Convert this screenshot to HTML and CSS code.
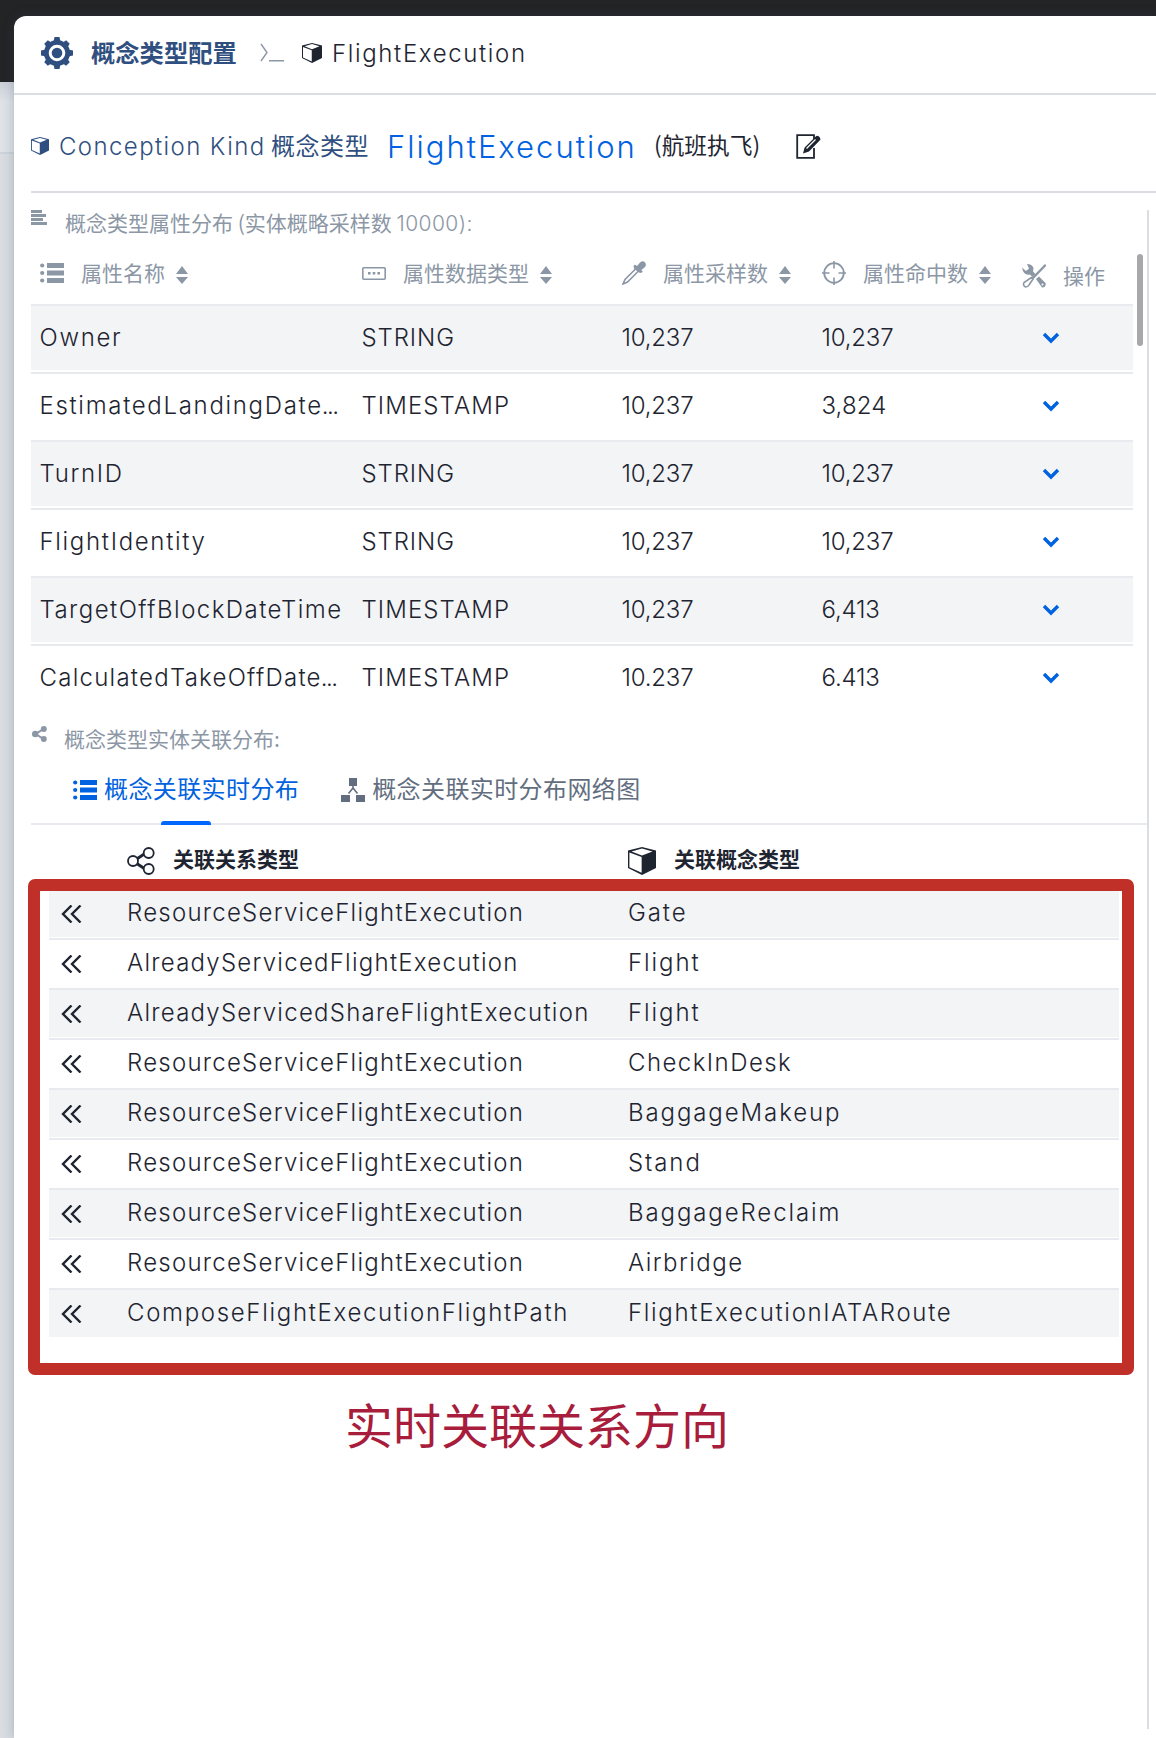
FILE: index.html
```html
<!DOCTYPE html>
<html lang="zh-CN">
<head>
<meta charset="utf-8">
<title>概念类型配置</title>
<link rel="stylesheet" href="styles.css">
</head>
<body>
<svg width="0" height="0" class="defs">
  <symbol id="cube" viewBox="0 0 16 16"><path d="M8 0 0 2v10l8 4 8-4V2zM.8 3.200l7 2.500v9L.8 11.500zM8 4.900 2 2.500 8 .8l6 1.700z" fill="currentColor" fill-rule="evenodd"/></symbol>
  <symbol id="list" viewBox="0 0 24 20"><path d="M7 0h17v5H7zM7 7.500h17v5H7zM7 15h17v5H7z" fill="currentColor"/><circle cx="2.200" cy="2.500" r="2.100" fill="currentColor"/><circle cx="2.200" cy="10" r="2.100" fill="currentColor"/><circle cx="2.200" cy="17.500" r="2.100" fill="currentColor"/></symbol>
  <symbol id="sort" viewBox="0 0 12 18"><path d="M6 0l6 8H0zM6 18l6-7H0z" fill="currentColor"/></symbol>
  <symbol id="down" viewBox="0 0 18 12"><path d="M2 2l7 7 7-7" fill="none" stroke="currentColor" stroke-width="3.400"/></symbol>
  <symbol id="left2" viewBox="0 0 21 18"><path d="M10.500 .5 2 9l8.500 8.500M19.500 .5 11 9l8.500 8.500" fill="none" stroke="currentColor" stroke-width="2.400"/></symbol>
</svg>
<div class="appbar"></div>
<div class="backdrop"></div>
<main class="drawer">
  <header class="head">
    <svg class="gear" viewBox="0 0 32 32"><g fill="currentColor"><circle cx="16" cy="16" r="13"/><path d="M13.500 0h5l1 5h-7zM13.500 32h5l1-5h-7zM0 13.500v5l5 1v-7zM32 13.500v5l-5 1v-7z"/><path transform="rotate(45 16 16)" d="M13.500 .5h5l1 4.500h-7zM13.500 31.500h5l1-4.500h-7zM.5 13.500v5l4.500 1v-7zM31.500 13.500v5l-4.500 1v-7z"/></g><circle cx="16" cy="16" r="6.800" fill="none" stroke="#fff" stroke-width="3"/></svg>
    <b class="title">概念类型配置</b>
    <svg class="prompt" viewBox="0 0 24 19"><path d="M1 1l6 8.500L1 18M9 17.800h15" fill="none" stroke="currentColor" stroke-width="1.400"/></svg>
    <svg class="cube-s"><use href="#cube"/></svg>
    <span class="lat t-head">FlightExecution</span>
  </header>
  <section class="kind">
    <svg class="cube-xs"><use href="#cube"/></svg>
    <span class="lat t-kind">Conception Kind</span>
    <span class="cn-kind">概念类型</span>
    <span class="lat t-name">FlightExecution</span>
    <span class="alias">(航班执飞)</span>
    <svg class="edit" viewBox="0 0 25 25"><path d="M18 5V1.200H1.200v22.600H18V14" fill="none" stroke="currentColor" stroke-width="1.800"/><path d="M7 19.500l1.600-6L20 2.200q1.400-1 3 .4t1.400 3.200L13 17.600z" fill="currentColor"/><path d="M10.500 14.500l9-9" stroke="#fff" stroke-width="1.200"/></svg>
  </section>
  <div class="content">
    <div class="caption">
      <svg class="lines" viewBox="0 0 16 15"><path d="M0 0h11v3H0zM0 4h15v3H0zM0 8h12v3H0zM0 12h16v3H0z" fill="currentColor"/></svg>
      <span>概念类型属性分布 (实体概略采样数 <i class="lat t-cap">10000):</i></span>
    </div>
    <div class="attrs">
      <div class="arow ahead">
        <div><svg class="i-list"><use href="#list"/></svg><span>属性名称</span><svg class="sort"><use href="#sort"/></svg></div>
        <div><svg class="i-list" viewBox="0 0 24 20"><rect x=".8" y="4.800" width="22.400" height="11.400" rx="1" fill="none" stroke="currentColor" stroke-width="1.600"/><path d="M6 9h2.600v2.600H6zM10.700 9h2.600v2.600h-2.600zM15.400 9H18v2.600h-2.600z" fill="currentColor"/></svg><span>属性数据类型</span><svg class="sort"><use href="#sort"/></svg></div>
        <div><svg class="i-sq" viewBox="0 0 24 24"><path d="M14 7.500 3 18.500 1 23l4.500-2L16.500 10" fill="none" stroke="currentColor" stroke-width="1.600"/><path d="M11.500 5l1.500-1.500 2 1.500L18 1.500q3-2.500 5 0t-.5 5L19.300 9l1.500 1.500-1.500 1.500-2.500-.5L12 7.500z" fill="currentColor"/></svg><span>属性采样数</span><svg class="sort"><use href="#sort"/></svg></div>
        <div><svg class="i-sq" viewBox="0 0 24 24"><circle cx="12" cy="12" r="9.800" fill="none" stroke="currentColor" stroke-width="1.800"/><path d="M12 0v7.500M12 16.500V24M0 12h7.500M16.500 12H24" stroke="currentColor" stroke-width="1.600"/></svg><span>属性命中数</span><svg class="sort"><use href="#sort"/></svg></div>
        <div class="ops"><svg class="i-sq" viewBox="0 0 24 24"><path d="M23 1.500 10 15" stroke="currentColor" stroke-width="2.400" stroke-linecap="round"/><path d="M9.500 13.500 2 18.500q-1.500 3 1.500 4.500Q6 23 7 21l4-6z" fill="#fff" stroke="currentColor" stroke-width="1.600"/><path d="M0 3.500l4 3.500 3-2.500L5 0q5 0 6.500 4L11 7.500l2.500 2.500-3 3L8 10.500Q1.500 12 0 3.500zM14 15l3-2.500 6.500 6.500q1 3.500-2.500 4.500h-1z" fill="currentColor"/><circle cx="20.500" cy="20.500" r="1" fill="#fff"/></svg><span>操作</span></div>
      </div>
      <div class="arow odd"><div class="lat k3">Owner</div><div class="lat">STRING</div><div class="num">10,237</div><div class="num">10,237</div><div class="act"><svg><use href="#down"/></svg></div></div>
      <div class="arow"><div class="lat k3">EstimatedLandingDate<i class="dots">...</i></div><div class="lat k0">TIMESTAMP</div><div class="num">10,237</div><div class="num n4">3,824</div><div class="act"><svg><use href="#down"/></svg></div></div>
      <div class="arow odd"><div class="lat k3">TurnID</div><div class="lat">STRING</div><div class="num">10,237</div><div class="num">10,237</div><div class="act"><svg><use href="#down"/></svg></div></div>
      <div class="arow"><div class="lat k3">FlightIdentity</div><div class="lat">STRING</div><div class="num">10,237</div><div class="num">10,237</div><div class="act"><svg><use href="#down"/></svg></div></div>
      <div class="arow odd"><div class="lat k2">TargetOffBlockDateTime</div><div class="lat k0">TIMESTAMP</div><div class="num">10,237</div><div class="num">6,413</div><div class="act"><svg><use href="#down"/></svg></div></div>
      <div class="arow last"><div class="lat k1">CalculatedTakeOffDate<i class="dots">...</i></div><div class="lat k0">TIMESTAMP</div><div class="num">10.237</div><div class="num">6.413</div><div class="act"><svg><use href="#down"/></svg></div></div>
      <div class="thumb"></div>
    </div>
    <div class="caption second">
      <svg class="share" viewBox="0 0 15 16"><path d="M11.500 3.200 3.500 8l8 4.800" fill="none" stroke="currentColor" stroke-width="2"/><circle cx="11.800" cy="3" r="3" fill="currentColor"/><circle cx="3.200" cy="8" r="3.200" fill="currentColor"/><circle cx="11.800" cy="13" r="3" fill="currentColor"/></svg>
      <span>概念类型实体关联分布:</span>
    </div>
    <nav class="tabs">
      <div class="tab on"><svg class="i-list"><use href="#list"/></svg><span>概念关联实时分布</span></div>
      <div class="tab"><svg class="net" viewBox="0 0 24 24"><path d="M8 0h8v8H8zM0 17h9v7H0zM15 17h9v7h-9z" fill="currentColor"/><path d="M12 7v4M12 10l-4.500 5.500M12 10l4.500 5.500" stroke="currentColor" stroke-width="1.600"/></svg><span>概念关联实时分布网络图</span></div>
    </nav>
    <div class="rels">
      <div class="rrow rhead"><div></div>
        <div><svg viewBox="0 0 28 28"><path d="M9 12.500l9-6M9 16l9 6" stroke="currentColor" stroke-width="3"/><g fill="#fff" stroke="currentColor" stroke-width="1.800"><circle cx="6" cy="14" r="5"/><circle cx="21.700" cy="6" r="5"/><circle cx="21.700" cy="22" r="5"/></g></svg><b>关联关系类型</b></div>
        <div><svg><use href="#cube"/></svg><b>关联概念类型</b></div></div>
      <div class="rrow odd"><div><svg><use href="#left2"/></svg></div><div class="lat k1">ResourceServiceFlightExecution</div><div class="lat k4">Gate</div></div>
      <div class="rrow"><div><svg><use href="#left2"/></svg></div><div class="lat k1">AlreadyServicedFlightExecution</div><div class="lat k4">Flight</div></div>
      <div class="rrow odd"><div><svg><use href="#left2"/></svg></div><div class="lat k1">AlreadyServicedShareFlightExecution</div><div class="lat k4">Flight</div></div>
      <div class="rrow"><div><svg><use href="#left2"/></svg></div><div class="lat k1">ResourceServiceFlightExecution</div><div class="lat k2">CheckInDesk</div></div>
      <div class="rrow odd"><div><svg><use href="#left2"/></svg></div><div class="lat k1">ResourceServiceFlightExecution</div><div class="lat k4">BaggageMakeup</div></div>
      <div class="rrow"><div><svg><use href="#left2"/></svg></div><div class="lat k1">ResourceServiceFlightExecution</div><div class="lat k4">Stand</div></div>
      <div class="rrow odd"><div><svg><use href="#left2"/></svg></div><div class="lat k1">ResourceServiceFlightExecution</div><div class="lat k4">BaggageReclaim</div></div>
      <div class="rrow"><div><svg><use href="#left2"/></svg></div><div class="lat k1">ResourceServiceFlightExecution</div><div class="lat k2">Airbridge</div></div>
      <div class="rrow odd"><div><svg><use href="#left2"/></svg></div><div class="lat k3">ComposeFlightExecutionFlightPath</div><div class="lat k3">FlightExecutionIATARoute</div></div>
    </div>
  </div>
</main>
<div class="callout"></div>
<div class="note">实时关联关系方向</div>
</body>
</html>
```
FILE: styles.css
```css
* { box-sizing: border-box; }
body { margin: 0; position: relative; height: 1738px; overflow: hidden; background: #dfe3e8; font-family: "Noto Sans CJK SC", sans-serif; color: #1e2531; font-size: 24px; }
svg { display: block; flex: none; }
i { font-style: normal; }
.defs { position: absolute; }
.appbar { height: 82px; background: #232426; }
.backdrop { height: 1656px; background: linear-gradient(#cbd0d8, #dfe3e8 20px, #dfe3e8 70px, #cdd3da 70px, #cdd3da 72px, #d9dde2 72px); }
.drawer { position: absolute; left: 14px; top: 16px; right: 0; bottom: 0; background: #fff; border-radius: 12px 0 0 0; box-shadow: 0 0 12px rgba(50, 65, 90, .3); display: flex; flex-direction: column; }

/* Latin text and its tracking steps */
.lat, .num { font-family: Inter, sans-serif; font-weight: 360; letter-spacing: .9px; white-space: nowrap; }
.num { letter-spacing: -.2px; }
.n4 { letter-spacing: .1px; }
.k0 { letter-spacing: 1.1px; }
.k1 { letter-spacing: 1.25px; }
.k2 { letter-spacing: 1.45px; }
.k3 { letter-spacing: 1.68px; }
.k4 { letter-spacing: 1.9px; }
.dots { letter-spacing: -1.500px; margin-left: -1px; }

.head { height: 79px; border-bottom: 2px solid #dadee3; display: flex; align-items: center; padding: 0 0 4px 27px; }
.gear { width: 32px; height: 32px; color: #2f4f80; }
.title { margin: -2px 0 0 18px; width: 146px; color: #2f4f80; font-size: 24.300px; white-space: nowrap; }
.prompt { width: 24px; height: 19px; margin-left: 23px; color: #8c97a6; }
.cube-s { width: 20px; height: 20px; margin-left: 18px; }
.t-head { margin: 2px 0 0 10px; letter-spacing: 1.64px; }

.kind { height: 98px; margin-left: 17px; border-bottom: 2px solid #dadee3; display: flex; align-items: center; padding-top: 6px; color: #2f4f80; white-space: nowrap; }
.cube-xs { width: 18px; height: 18px; }
.t-kind { margin-left: 10px; width: 212px; letter-spacing: 1.4px; }
.cn-kind { width: 116px; margin-top: -4px; letter-spacing: .5px; }
.t-name { width: 267px; font-size: 31px; letter-spacing: 2px; color: #0062e0; }
.alias { width: 142px; margin-top: -4px; font-size: 22.700px; color: #1e2531; }
.edit { width: 25px; height: 25px; color: #1e2531; }

.content { margin: 17px 7px 9px 17px; flex: 1; border-right: 2px solid #dadee3; }
.caption { display: flex; height: 29px; font-size: 21px; line-height: 25px; color: #8c97a6; }
.caption span { margin-left: 18px; white-space: nowrap; }
.t-cap { letter-spacing: .4px; }
.lines { width: 16px; height: 15px; }
.attrs { position: relative; width: 1114px; height: 449px; font-size: 24px; }
.arow { display: grid; grid-template-columns: 322px 260px 200px 200px 120px; width: 1102px; height: 68px; border-top: 2px solid #e7eaef; }
.arow.last { height: 44px; }
.arow > div { padding-left: 8.500px; line-height: 64px; }
.arow.odd { background: linear-gradient(#f3f4f6, #f3f4f6) 0 0 / 100% 64px no-repeat; }
.ahead { height: 65px; border: 0; color: #8c97a6; font-size: 21px; }
.ahead > div { display: flex; align-items: center; height: 65px; padding: 3px 0 0 9px; line-height: 30px; }
.ahead span { margin: -2px 0 0 17px; white-space: nowrap; }
.ahead > .ops { padding: 9px 0 0 9px; }
.i-list { width: 24px; height: 20px; }
.i-sq { width: 24px; height: 24px; }
.sort { width: 12px; height: 18px; margin: 4px 0 0 11px; }
.act svg { width: 18px; height: 12px; margin: 26px 0 0 20px; color: #0062e0; }
.act { height: 44px; }
.thumb { position: absolute; left: 1106px; top: 15px; width: 6px; height: 92px; border-radius: 3px; background: #a8a8a8; }

.second { margin-top: 38px; height: 45px; }
.share { width: 15px; height: 16px; margin-left: 1px; }
.second span { margin-left: 17px; }
.tabs { display: flex; gap: 42px; height: 54px; border-bottom: 2px solid #e7eaef; padding-left: 42px; }
.tab { display: flex; gap: 7px; height: 37px; align-items: center; color: #626e80; letter-spacing: .4px; white-space: nowrap; }
.tab span { margin-top: -4px; }
.tab.on { position: relative; color: #0062e0; }
.tab.on::after { content: ""; position: absolute; left: 88px; top: 50px; width: 50px; height: 4px; border-radius: 3px 3px 0 0; background: #0068ff; }
.net { width: 24px; height: 24px; }

.rels { margin-left: 18px; width: 1070px; padding-top: 8px; }
.rrow { display: grid; grid-template-columns: 78px 501px 1fr; height: 50px; border-top: 2px solid #e7eaef; align-items: center; }
.rrow.odd { background: linear-gradient(#f3f4f6, #f3f4f6) 0 0 / 100% 47px no-repeat; }
.rrow .lat { margin-top: -3px; }
.rrow.rhead { height: 55px; border: 0; }
.rhead > div { display: flex; align-items: center; gap: 18px; font-size: 21px; }
.rhead b { margin-top: -5px; }
.rhead svg { width: 28px; height: 28px; }
.rrow:not(.rhead) svg { width: 21px; height: 18px; margin-left: 11.500px; }

.callout { position: absolute; left: 28px; top: 879px; width: 1106px; height: 496px; border: 12px solid #c03028; border-radius: 7px; }
.note { position: absolute; left: 345px; top: 1388px; font-size: 48px; line-height: 70px; color: #a81c3c; white-space: nowrap; }
```
